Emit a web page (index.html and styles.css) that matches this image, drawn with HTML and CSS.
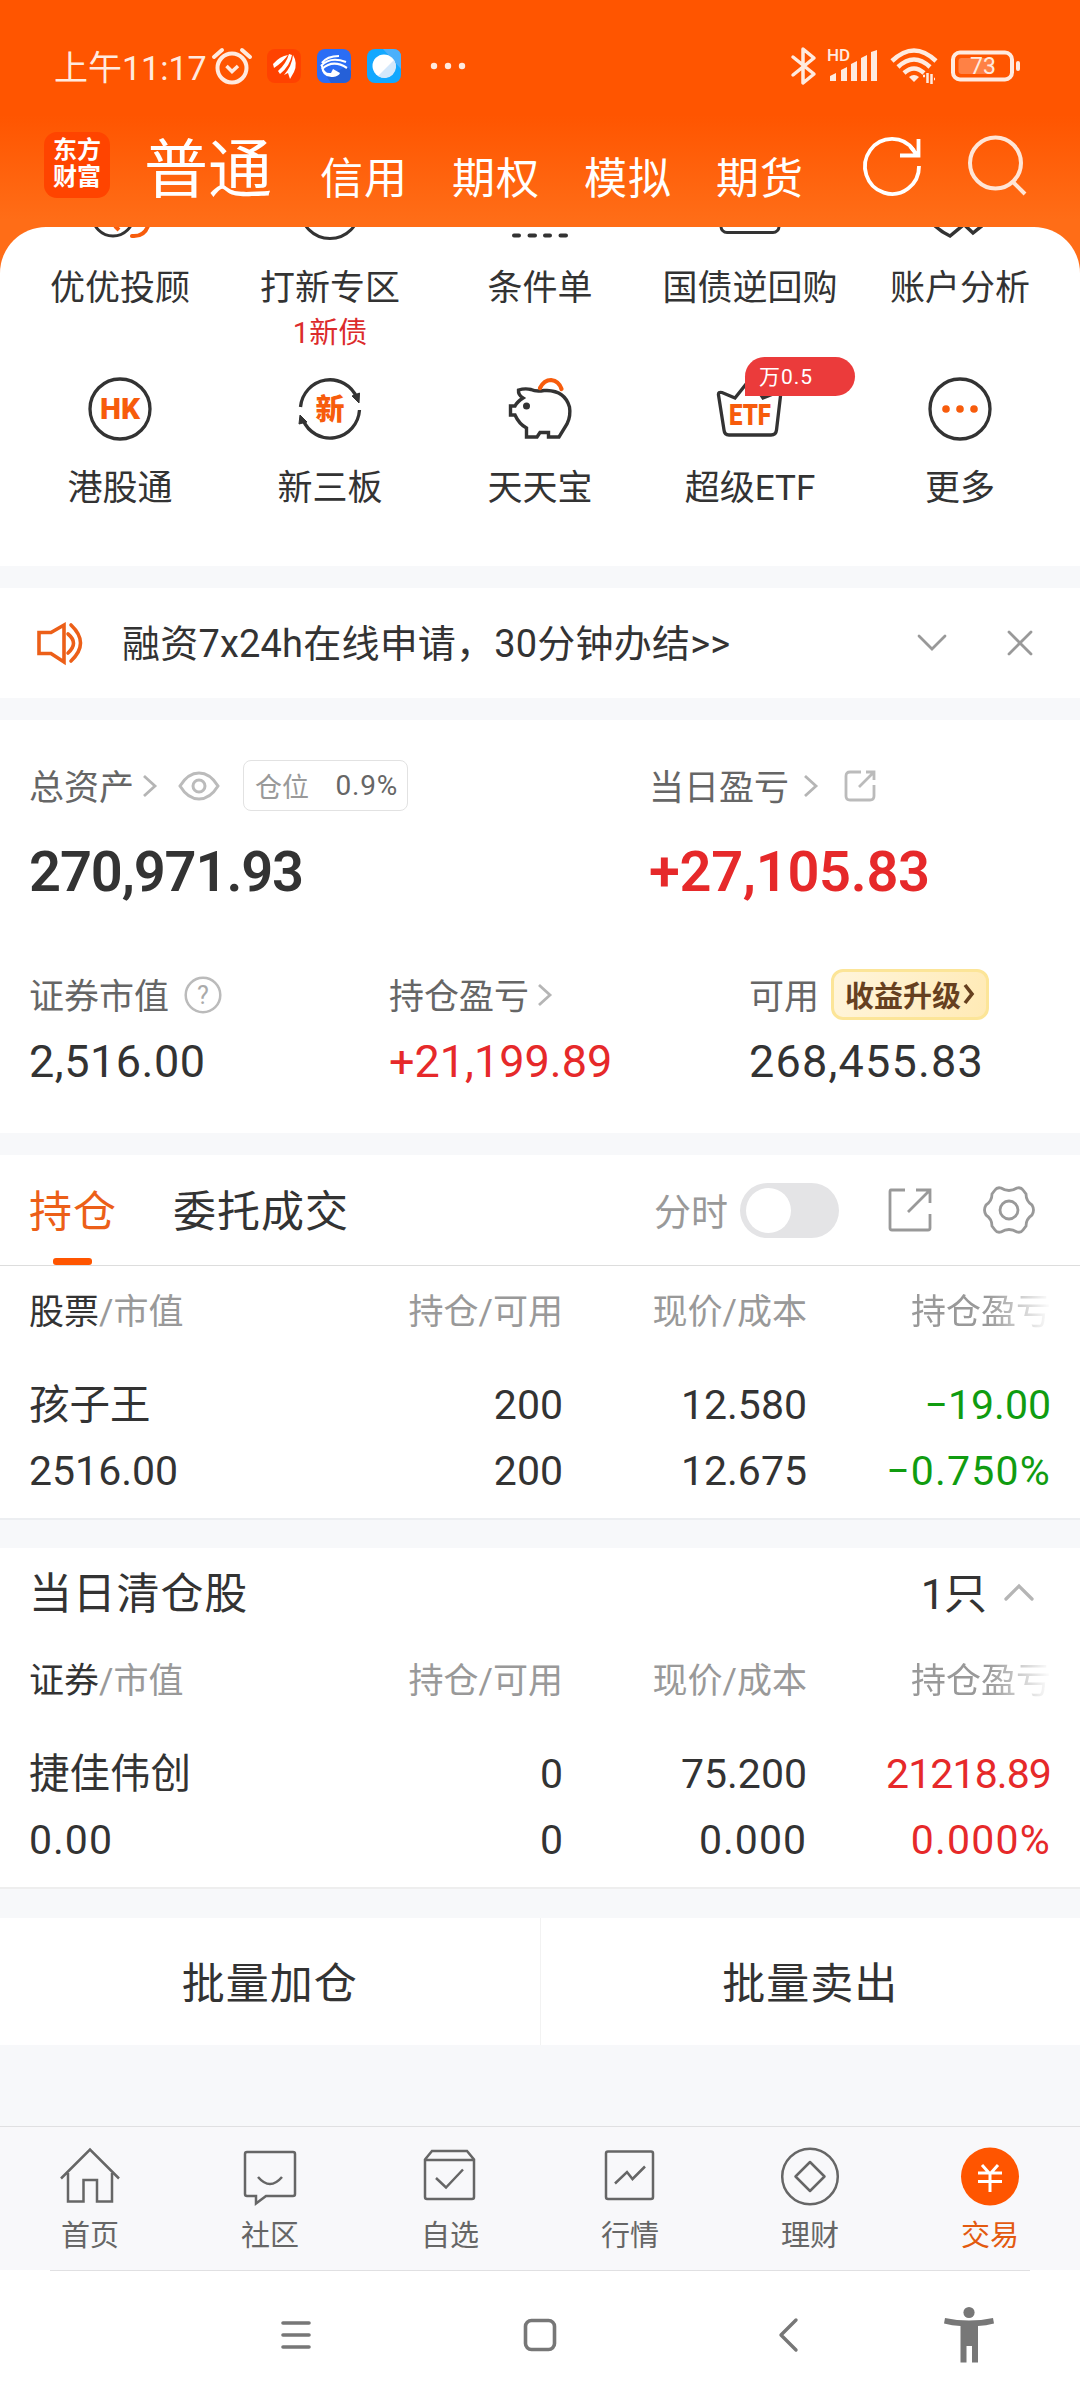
FILE: index.html
```html
<!DOCTYPE html>
<html lang="zh-CN">
<head>
  <meta charset="UTF-8">
  <meta name="viewport" content="width=device-width, initial-scale=1">
  <title>东方财富 - 交易</title>
  <link rel="stylesheet" href="styles.css">
</head>
<body>

<header class="header">
  <div class="status-bar">
    <span class="time">上午11:17</span>
    <svg class="alarm" width="40" height="38" viewBox="0 0 40 38" fill="none" stroke="#ffeadf" stroke-width="4">
      <circle cx="20" cy="21" r="14.5"/>
      <path d="M2 10 L10 3 M38 10 L30 3" stroke-linecap="round"/>
      <path d="M14.500 19 L20 24.500 L26 19" stroke-width="3.500"/>
    </svg>
    <svg class="app" width="34" height="34" viewBox="0 0 34 34">
      <rect width="34" height="34" rx="8" fill="#ff4200"/>
      <path d="M6 15 Q13 7 21 6 Q16 13 7 19Z M11 22 Q19 15 22 5 L25 6 Q23 17 13 25Z M17 26 Q25 17 26 6 Q31 14 27 23 L23 30 L21 24Z" fill="#fff"/>
    </svg>
    <svg class="app" width="34" height="34" viewBox="0 0 34 34">
      <rect width="34" height="34" rx="8" fill="#2b6df5"/>
      <path d="M14 34 L10 28 L30 17 L34 22 V26 Q34 34 26 34Z" fill="#2560d8"/>
      <path d="M5 14 Q10 7 22 7 M4 17 Q13 7 29 13 M5 20 Q16 10 30 19" fill="none" stroke="#fff" stroke-width="2.200"/>
      <path d="M4 17 Q5 29 16 28 Q22 27 23 24 L16 20 L14 24 Q7 25 6 17Z" fill="#fff"/>
    </svg>
    <svg class="app" width="34" height="34" viewBox="0 0 34 34">
      <rect width="34" height="34" rx="8" fill="#12a8ff"/>
      <path d="M16 0 H26 Q34 0 34 8 V20Z" fill="#4bb0fb"/>
      <circle cx="17" cy="17" r="11.500" fill="#fff"/>
      <path d="M27 11 A11.500 11.500 0 0 1 11 27Z" fill="#d3e8fb"/>
    </svg>
    <svg class="dots" width="36" height="8" viewBox="0 0 36 8" fill="#ffeadf">
      <circle cx="4" cy="4" r="3.200"/><circle cx="18" cy="4" r="3.200"/><circle cx="32" cy="4" r="3.200"/>
    </svg>

    <svg class="bluetooth" width="26" height="40" viewBox="0 0 26 40" fill="none" stroke="#ffeadf" stroke-width="3.500" stroke-linecap="round" stroke-linejoin="round">
      <path d="M2 11 L23 28 L12 37 V3 L23 12 L2 29"/>
    </svg>
    <svg class="signal" width="52" height="36" viewBox="0 0 52 36" fill="#ffeadf">
      <text x="0" y="13" font-size="17" font-weight="500">HD</text>
      <path d="M3 33 V28 L9 25 V33Z M14 33 V22 L20 19 V33Z M24 33 V16 L30 13 V33Z M34 33 V10 L40 7 V33Z M44 33 V4 L50 2 V33Z"/>
    </svg>
    <svg class="wifi" width="48" height="38" viewBox="0 0 48 38" fill="none" stroke="#ffeadf" stroke-width="4.500">
      <path d="M2 14 Q24 -7 46 14 M8 20 Q24 5 40 20 M14 26 Q24 17 34 26"/>
      <path d="M19 30 Q24 26 29 30 L24 35Z" fill="#ffeadf" stroke="none"/>
      <path d="M33 29 H35 M37.500 26 V36 M41.500 37 V27 M44 32 H45" stroke-width="2.500"/>
    </svg>
    <svg class="battery" width="70" height="32" viewBox="0 0 70 32">
      <rect x="2" y="2.500" width="59" height="27" rx="7" fill="none" stroke="#ffeadf" stroke-width="4"/>
      <rect x="7.500" y="8" width="35" height="16" rx="3" fill="#ff8145"/>
      <rect x="65" y="11" width="4" height="10" rx="2" fill="#ffeadf"/>
      <text x="19" y="24" font-size="23" fill="#ffeadf">73</text>
    </svg>
  </div>

  <nav class="account-nav">
    <div class="logo">东方<br>财富</div>
    <span class="account active">普通</span>
    <span class="account">信用</span>
    <span class="account">期权</span>
    <span class="account">模拟</span>
    <span class="account">期货</span>
    <svg class="refresh" width="58" height="60" viewBox="0 0 58 60" fill="none" stroke="#fff" stroke-width="3.800">
      <path d="M55 31 A27 27.500 0 1 1 50 15.500"/>
      <path d="M36 20.500 H54.500 V4 M53 20 L46 11"/>
    </svg>
    <svg class="search" width="60" height="62" viewBox="0 0 60 62" fill="none" stroke="#ffe5d6" stroke-width="4">
      <circle cx="27.500" cy="29" r="25.500"/>
      <path d="M44 47 L57 60"/>
    </svg>
  </nav>
</header>

<main>
  <section class="quick">
    <div class="quick-item">
      <svg width="62" height="62" viewBox="0 0 62 62" fill="none" stroke="#333" stroke-width="3">
        <circle cx="24" cy="37.500" r="20.500"/>
        <path d="M59 48 Q55 59 43 58" stroke="#f75c0c" stroke-width="4" stroke-linecap="round"/>
        <path d="M26 48 L30 52" stroke="#f75c0c" stroke-width="4"/>
      </svg>
      <span>优优投顾</span>
    </div>
    <div class="quick-item">
      <svg width="62" height="62" viewBox="0 0 62 62" fill="none" stroke="#333" stroke-width="3">
        <circle cx="31" cy="31" r="29.500"/>
      </svg>
      <span>打新专区</span>
      <em>1新债</em>
    </div>
    <div class="quick-item">
      <svg width="62" height="62" viewBox="0 0 62 62" stroke="#333" stroke-width="4" stroke-linecap="round">
        <path d="M5 57.500 H10 M20.500 57.500 H26 M36 57.500 H41 M51.500 57.500 H57"/>
      </svg>
      <span>条件单</span>
    </div>
    <div class="quick-item">
      <svg width="62" height="62" viewBox="0 0 62 62" fill="none" stroke="#333" stroke-width="3">
        <rect x="2" y="15" width="58" height="39.500" rx="6"/>
      </svg>
      <span>国债逆回购</span>
    </div>
    <div class="quick-item">
      <svg width="62" height="62" viewBox="0 0 62 62" fill="none" stroke="#333" stroke-width="3.500">
        <path d="M4 46 Q12 54 21 58 L35 46.500 L44 55 L54 47"/>
      </svg>
      <span>账户分析</span>
    </div>
    <div class="quick-item">
      <svg width="62" height="62" viewBox="0 0 62 62">
        <circle cx="31" cy="31" r="30" fill="none" stroke="#333" stroke-width="3.300"/>
        <text class="icon-text" x="11" y="41" font-size="29" textLength="40" lengthAdjust="spacingAndGlyphs">HK</text>
      </svg>
      <span>港股通</span>
    </div>
    <div class="quick-item">
      <svg width="62" height="62" viewBox="0 0 62 62">
        <path d="M1.500 29 A29.500 30 0 0 1 58 20 M60.500 32 A29.500 30 0 0 1 4 42" fill="none" stroke="#333" stroke-width="3.300"/>
        <path d="M53 18 L60.500 15 L60 25Z M1 37 L8 44 L0 46Z" fill="#333" stroke="#333"/>
        <text class="icon-text" x="16.500" y="42" font-size="29">新</text>
      </svg>
      <span>新三板</span>
    </div>
    <div class="quick-item">
      <svg width="62" height="62" viewBox="0 0 62 62" fill="none" stroke="#333" stroke-width="3.400">
        <path d="M35 12.500 Q27 14 22 11.500 Q16 10 9.500 12 Q9 17 14 20 Q8 24 6 28 H1.500 V37 H6 Q10 46 17.500 50 V59 H28 L31 54.500 H39.500 V59 H50 L58 46 Q62 38 60.500 29 Q56 13 38 12.500Z"/>
        <circle cx="17.500" cy="28" r="3.500" fill="#333" stroke="none"/>
        <path d="M31 10 Q35 2 42 2 Q50 3 52.500 11" stroke="#f75c0c" stroke-width="4.200" stroke-linecap="round"/>
      </svg>
      <span>天天宝</span>
    </div>
    <div class="quick-item">
      <svg width="62" height="62" viewBox="0 0 62 62">
        <path d="M-0.500 17 Q-1 13.500 3 14.500 L16 20 L28 5 H34 L44 20 L58 14.500 Q62 13.500 61.500 18 L57.500 52 Q57 57 52 57 H10 Q5.500 57 5 52Z" fill="none" stroke="#333" stroke-width="3.300"/>
        <text class="icon-text" x="10" y="47" font-size="29" textLength="42" lengthAdjust="spacingAndGlyphs">ETF</text>
      </svg>
      <b class="badge">万0.5</b>
      <span>超级ETF</span>
    </div>
    <div class="quick-item">
      <svg width="62" height="62" viewBox="0 0 62 62" fill="#f75c0c">
        <circle cx="31" cy="31" r="30" fill="none" stroke="#333" stroke-width="3.300"/>
        <circle cx="17" cy="31" r="3.800"/><circle cx="31" cy="31" r="3.800"/><circle cx="45" cy="31" r="3.800"/>
      </svg>
      <span>更多</span>
    </div>
  </section>

  <section class="notice">
    <svg width="50" height="44" viewBox="0 0 50 44" fill="none" stroke="#ec5f18" stroke-width="3.600">
      <path d="M2 11.500 H14 L27 4 V41 L14 32.500 H2Z"/>
      <path d="M31 13 Q42 22 31 32 M34 4 Q53 22 34 40" stroke-linecap="round"/>
    </svg>
    <span class="notice-text">融资7x24h在线申请，30分钟办结&gt;&gt;</span>
    <svg class="notice-down" width="30" height="18" viewBox="0 0 30 18" fill="none" stroke="#999" stroke-width="2.800" stroke-linecap="round">
      <path d="M2 2 L15 15 L28 2"/>
    </svg>
    <svg class="notice-close" width="26" height="26" viewBox="0 0 26 26" fill="none" stroke="#999" stroke-width="2.800" stroke-linecap="round">
      <path d="M2 2 L24 24 M24 2 L2 24"/>
    </svg>
  </section>

  <section class="assets">
    <div class="assets-top">
      <div>
        <div class="label">总资产
          <svg class="arrow" width="15" height="24" viewBox="0 0 15 24"><path d="M2 2 L13 12 L2 22"/></svg>
          <svg class="eye" width="42" height="30" viewBox="0 0 42 30" fill="none" stroke="#bbb" stroke-width="3">
            <path d="M2 15 Q10 2 21 2 Q32 2 40 15 Q32 28 21 28 Q10 28 2 15Z"/><circle cx="21" cy="15" r="6"/>
          </svg>
          <span class="position">仓位 <b>0.9%</b></span>
        </div>
        <div class="total">270,971.93</div>
      </div>
      <div>
        <div class="label">当日盈亏
          <svg class="arrow wide" width="15" height="24" viewBox="0 0 15 24"><path d="M2 2 L13 12 L2 22"/></svg>
          <svg class="share" width="32" height="32" viewBox="0 0 32 32" fill="none" stroke="#bbb" stroke-width="2.800">
            <path d="M17 2 H6 Q2 2 2 6 V26 Q2 30 6 30 H26 Q30 30 30 26 V15 M22 2 H30 V10 M30 2 L15 17"/>
          </svg>
        </div>
        <div class="total red">+27,105.83</div>
      </div>
    </div>
    <div class="assets-bottom">
      <div>
        <div class="label">证券市值
          <svg class="help" width="38" height="38" viewBox="0 0 38 38">
            <circle cx="19" cy="19" r="17.300" fill="none" stroke="#bbb" stroke-width="2.500"/>
            <text x="19" y="28" font-size="25" fill="#aaa" text-anchor="middle">?</text>
          </svg>
        </div>
        <div class="amount">2,516.00</div>
      </div>
      <div>
        <div class="label">持仓盈亏
          <svg class="arrow" width="15" height="24" viewBox="0 0 15 24"><path d="M2 2 L13 12 L2 22"/></svg>
        </div>
        <div class="amount red">+21,199.89</div>
      </div>
      <div>
        <div class="label">可用
          <span class="upgrade">收益升级<svg width="12" height="22" viewBox="0 0 12 22" fill="none" stroke="#66401f" stroke-width="3.600"><path d="M2 2 L9 11 L2 20"/></svg></span>
        </div>
        <div class="amount available">268,455.83</div>
      </div>
    </div>
  </section>

  <section class="holdings">
    <div class="tabs">
      <span class="tab active">持仓</span>
      <span class="tab">委托成交</span>
      <span class="switch-label">分时</span>
      <i class="switch"></i>
      <svg class="tab-share" width="44" height="44" viewBox="0 0 44 44" fill="none" stroke="#999" stroke-width="2.800">
        <path d="M17 2 H3 Q2 2 2 4 V40 Q2 42 4 42 H40 Q42 42 42 40 V26 M28 2 H42 V15 M42 2 L20 24"/>
      </svg>
      <svg class="gear" width="52" height="50" viewBox="0 0 52 50" fill="none" stroke="#999" stroke-width="2.800">
        <path d="M12 5 Q14 2 18 3 Q26 8 34 3 Q38 2 40 5 L43 9 Q43 16 49 20 Q52 25 49 30 Q43 34 43 41 L40 45 Q38 48 34 47 Q26 42 18 47 Q14 48 12 45 L9 41 Q9 34 3 30 Q0 25 3 20 Q9 16 9 9Z"/>
        <circle cx="26" cy="25" r="9"/>
      </svg>
    </div>
    <table class="stock-table">
      <thead>
        <tr><th><b>股票</b>/市值</th><th>持仓/可用</th><th>现价/成本</th><th><span class="fade">持仓盈亏</span></th></tr>
      </thead>
      <tbody>
        <tr><td class="name">孩子王</td><td>200</td><td>12.580</td><td class="green">−19.00</td></tr>
        <tr><td>2516.00</td><td>200</td><td>12.675</td><td class="green percent">−0.750%</td></tr>
      </tbody>
    </table>
  </section>

  <section class="cleared">
    <div class="cleared-title">
      <span>当日清仓股</span>
      <span class="count">1只</span>
      <svg width="30" height="18" viewBox="0 0 30 18" fill="none" stroke="#b5b5b5" stroke-width="3.300" stroke-linecap="round">
        <path d="M2 16 L15 3 L28 16"/>
      </svg>
    </div>
    <table class="stock-table">
      <thead>
        <tr><th><b>证券</b>/市值</th><th>持仓/可用</th><th>现价/成本</th><th><span class="fade">持仓盈亏</span></th></tr>
      </thead>
      <tbody>
        <tr><td class="name">捷佳伟创</td><td>0</td><td>75.200</td><td class="red profit">21218.89</td></tr>
        <tr><td class="wide">0.00</td><td>0</td><td class="wide">0.000</td><td class="red percent">0.000%</td></tr>
      </tbody>
    </table>
  </section>

  <section class="batch">
    <button>批量加仓</button>
    <button>批量卖出</button>
  </section>
</main>

<nav class="tabbar">
  <a class="tabbar-item">
    <svg width="60" height="60" viewBox="0 0 60 60"><path d="M1 31.500 L30 2.500 L59 31.500 M8 26 V54.500 H23.500 V33 H37 V54.500 H52 V26"/></svg>
    <span>首页</span>
  </a>
  <a class="tabbar-item">
    <svg width="60" height="60" viewBox="0 0 60 60"><path d="M7 5 H53 Q55 5 55 7 V47 Q55 49 53 49 H26 L16 56.500 V49 H7 Q5 49 5 47 V7 Q5 5 7 5Z M18 30 Q30 44 42 30"/></svg>
    <span>社区</span>
  </a>
  <a class="tabbar-item">
    <svg width="60" height="60" viewBox="0 0 60 60"><path d="M5 12.500 L12 4 H47 L54 12.500 V50 Q54 52 52 52 H7 Q5 52 5 50Z M5 13 H54 M16 31 L26 40.500 L43 22.500"/></svg>
    <span>自选</span>
  </a>
  <a class="tabbar-item">
    <svg width="60" height="60" viewBox="0 0 60 60"><rect x="6" y="4.500" width="47" height="47.500" rx="2"/><path d="M15 36.500 L27 25 L32.500 32 L45 19.500"/></svg>
    <span>行情</span>
  </a>
  <a class="tabbar-item">
    <svg width="60" height="60" viewBox="0 0 60 60"><circle cx="30" cy="29.500" r="27.800"/><path d="M30 15 L44.500 29.500 L30 44 L15.500 29.500Z" stroke-linejoin="round"/></svg>
    <span>理财</span>
  </a>
  <a class="tabbar-item active">
    <svg width="60" height="60" viewBox="0 0 60 60"><circle class="solid" cx="30" cy="29.500" r="29"/><path class="yen" d="M22 18 L30 27 L38 18 M18 26 H42 M18 34.500 H42 M30 27 V45"/></svg>
    <span>交易</span>
  </a>
</nav>

<footer class="system-nav">
  <svg class="menu" width="32" height="30" viewBox="0 0 32 30" stroke="#777" stroke-width="3.600" stroke-linecap="round"><path d="M3 3 H29 M3 15 H29 M3 27 H29"/></svg>
  <svg class="home" width="34" height="34" viewBox="0 0 34 34" fill="none" stroke="#777" stroke-width="3.600"><rect x="2.500" y="2.500" width="29" height="29" rx="6"/></svg>
  <svg class="back" width="20" height="34" viewBox="0 0 20 34" fill="none" stroke="#777" stroke-width="3.400" stroke-linecap="round" stroke-linejoin="round"><path d="M18 2 L3 17 L18 32"/></svg>
  <svg class="person" width="50" height="58" viewBox="0 0 50 58" fill="#777">
    <circle cx="25" cy="6.500" r="5.600"/>
    <path d="M1 12 Q25 17 49 12 L50 17.500 Q42 19.500 34 20 V56.500 H28 V40 H22.500 V56.500 H16.500 V20 Q8 19.500 0 17.500Z"/>
  </svg>
</footer>

</body>
</html>
```
FILE: styles.css
```css
* {
  box-sizing: border-box;
}
body {
  margin: 0;
  width: 1080px;
  height: 2400px;
  overflow: hidden;
  display: flex;
  flex-direction: column;
  background: #f7f8fa;
  color: #333;
  font-family: Roboto, "Noto Sans CJK SC", sans-serif;
}
svg {
  display: block;
  flex: none;
  overflow: visible;
}
b, em, i {
  font-weight: normal;
  font-style: normal;
}
.red {
  color: #e6292a;
}
.green {
  color: #109c10;
}

/* header */
.header {
  height: 275px;
  flex: none;
  background: linear-gradient(#ff5500 0, #ff5500 115px, #ff6d17 220px);
  color: #fff;
}
.status-bar {
  display: flex;
  align-items: center;
  height: 132px;
  padding: 0 59px 0 54px;
  color: #ffeadf;
}
.time {
  width: 158px;
  padding-bottom: 2px;
  font-size: 34px;
  white-space: nowrap;
}
.app {
  margin-left: 16px;
}
.alarm + .app {
  margin-left: 15px;
}
.dots {
  margin-left: 29px;
}
.bluetooth {
  margin-left: auto;
}
.signal {
  margin-left: 10px;
}
.wifi {
  margin-left: 11px;
}
.battery {
  margin-left: 13px;
}
.account-nav {
  display: flex;
  height: 95px;
  padding-left: 44px;
}
.logo {
  width: 66px;
  height: 66px;
  padding-top: 5px;
  margin-right: 34px;
  border-radius: 13px;
  background: #ff4400;
  font-size: 24px;
  font-weight: bold;
  line-height: 27px;
  text-align: center;
}
.account {
  font-size: 43px;
  line-height: 60px;
  padding-top: 17px;
  width: 132px;
  letter-spacing: 1px;
}
.account.active {
  font-size: 64px;
  line-height: 70px;
  padding-top: 4px;
  width: 176px;
  letter-spacing: 0;
}
.refresh {
  margin: 3px 0 0 16px;
}
.search {
  margin: 2px 0 0 46px;
}

/* shortcuts */
main {
  flex: 1;
  margin-top: -48px;
}
.quick {
  display: grid;
  grid-template-columns: repeat(5, 210px);
  grid-auto-rows: 200px;
  justify-content: center;
  align-content: end;
  height: 339px;
  border-radius: 46px 46px 0 0;
  background: #fff;
  overflow: hidden;
}
.quick-item {
  position: relative;
  display: flex;
  flex-direction: column;
  align-items: center;
  font-size: 35px;
  line-height: 44px;
  white-space: nowrap;
  transform: translateY(12px);
}
.quick-item span {
  margin-top: 27px;
}
.quick-item em {
  font-size: 29px;
  line-height: 30px;
  margin-top: 7px;
  color: #dc2b2b;
}
.icon-text {
  fill: #f75c0c;
  font-weight: 900;
}
.badge {
  position: absolute;
  top: -21px;
  left: 100px;
  width: 110px;
  height: 39px;
  padding-left: 14px;
  border-radius: 20px 20px 20px 0;
  background: #eb3b3b;
  color: #fff;
  font-size: 21px;
  line-height: 40px;
  letter-spacing: 1px;
}

/* notice */
.notice {
  display: flex;
  align-items: center;
  height: 110px;
  margin: 22px 0;
  padding: 0 47px 0 37px;
  background: #fff;
}
.notice-text {
  margin-left: 35px;
  padding-bottom: 5px;
  font-size: 38px;
  letter-spacing: 0.2px;
}
.notice-down {
  margin-left: auto;
}
.notice-close {
  margin-left: 60px;
}

/* assets */
.assets {
  height: 413px;
  padding: 40px 0 0 29px;
  background: #fff;
}
.assets-top {
  display: grid;
  grid-template-columns: 620px 1fr;
}
.assets-bottom {
  display: grid;
  grid-template-columns: 360px 360px 1fr;
  margin-top: 67px;
}
.label {
  display: flex;
  align-items: center;
  height: 52px;
  padding-bottom: 4px;
  font-size: 35px;
  color: #666;
}
.label > * {
  margin-top: 3px;
}
.arrow {
  margin-left: 8px;
  fill: none;
  stroke: #b5b5b5;
  stroke-width: 2.8;
}
.arrow.wide {
  margin-left: 14px;
}
.eye {
  margin-left: 21px;
}
.position {
  flex: none;
  display: flex;
  align-items: center;
  justify-content: space-between;
  width: 165px;
  height: 51px;
  margin-left: 23px;
  padding: 0 9px 0 11px;
  border: 1px solid #e2e2e2;
  border-radius: 8px;
  font-size: 27px;
  color: #999;
}
.position b {
  font-size: 28px;
  letter-spacing: 0.8px;
  color: #666;
}
.share {
  margin-left: 26px;
}
.total {
  font-size: 56px;
  font-weight: 600;
  line-height: 60px;
  margin-top: 30px;
  letter-spacing: -1.1px;
}
.total.red {
  letter-spacing: -0.3px;
}
.help {
  margin-left: 15px;
}
.upgrade {
  flex: none;
  display: flex;
  align-items: center;
  justify-content: center;
  gap: 2px;
  width: 158px;
  height: 51px;
  margin-left: 12px;
  padding-bottom: 2px;
  border: 3px solid #fce598;
  border-radius: 12px;
  background: linear-gradient(110deg, #fff5dc, #ffeab5);
  font-size: 29px;
  font-weight: bold;
  color: #66401f;
}
.amount {
  font-size: 45px;
  line-height: 52px;
  margin-top: 15px;
  letter-spacing: 0.5px;
}
.amount.red {
  letter-spacing: 0;
}
.amount.available {
  letter-spacing: 1.2px;
}

/* holdings */
.holdings {
  margin-top: 22px;
  height: 365px;
  background: #fff;
  border-bottom: 2px solid #eceef1;
}
.tabs {
  display: flex;
  align-items: center;
  height: 111px;
  padding: 0 45px 0 29px;
  border-bottom: 1px solid #ddd;
}
.tab {
  position: relative;
  margin-right: 56px;
  padding-bottom: 4px;
  font-size: 43px;
  letter-spacing: 1px;
}
.tab.active {
  color: #ec5f18;
}
.tab.active::after {
  content: "";
  position: absolute;
  left: 24px;
  bottom: -22px;
  width: 39px;
  height: 7px;
  border-radius: 3px;
  background: #ff5500;
}
.switch-label {
  margin-left: auto;
  font-size: 37px;
  color: #999;
}
.switch {
  width: 99px;
  height: 55px;
  margin-left: 12px;
  padding: 5px 6px;
  border-radius: 28px;
  background: #e4e4e6;
}
.switch::before {
  content: "";
  display: block;
  width: 45px;
  height: 45px;
  border-radius: 50%;
  background: #fff;
}
.tab-share {
  margin-left: 49px;
}
.gear {
  margin-left: 51px;
}
.stock-table {
  width: 1051px;
  border-spacing: 0;
  table-layout: fixed;
}
.stock-table th {
  height: 106px;
  padding: 0 0 22px;
  font-size: 35px;
  font-weight: normal;
  color: #999;
  text-align: right;
}
.stock-table th b {
  color: #333;
}
.stock-table td {
  height: 66px;
  padding: 0;
  font-size: 41px;
  line-height: 66px;
  text-align: right;
}
.stock-table .name {
  font-size: 40.5px;
}
.stock-table .wide {
  letter-spacing: 1px;
}
.stock-table .percent {
  letter-spacing: 1.2px;
}
.stock-table .profit {
  letter-spacing: -0.9px;
}
.stock-table th:first-child,
.stock-table td:first-child {
  width: 320px;
  padding-left: 29px;
  text-align: left;
}
.stock-table th:nth-child(3),
.stock-table th:nth-child(4) {
  width: 244px;
}
.fade {
  -webkit-mask-image: linear-gradient(90deg, #000 55%, transparent);
  mask-image: linear-gradient(90deg, #000 55%, transparent);
}

/* sold today */
.cleared {
  margin-top: 28px;
  height: 341px;
  background: #fff;
  border-bottom: 2px solid #eee;
}
.cleared-title {
  display: flex;
  align-items: center;
  height: 87px;
  padding: 0 46px 0 29px;
  font-size: 43px;
}
.cleared-title span {
  padding-bottom: 4px;
  letter-spacing: 0.8px;
}
.cleared-title .count {
  margin: 0 18px 0 auto;
  letter-spacing: -1px;
}
.batch {
  display: flex;
  margin-top: 29px;
  height: 127px;
  background: #fff;
}
.batch button {
  flex: 1;
  padding: 0 0 4px;
  border: 0;
  background: none;
  color: #333;
  font-family: inherit;
  font-size: 43px;
  letter-spacing: 1px;
}
.batch button:first-child {
  border-right: 1px solid #f2f2f2;
}

/* bottom bars */
.tabbar {
  display: grid;
  grid-template-columns: repeat(6, 1fr);
  flex: none;
  height: 144px;
  padding-top: 20px;
  border-top: 1px solid #e0e0e2;
  background: #f8f8fa;
}
.tabbar-item {
  display: flex;
  flex-direction: column;
  align-items: center;
  color: #666;
  font-size: 29px;
  line-height: 40px;
}
.tabbar-item svg {
  fill: none;
  stroke: #666;
  stroke-width: 2.5;
  margin-bottom: 9px;
}
.tabbar-item.active {
  color: #e35a10;
}
.tabbar-item .solid {
  fill: #ff5500;
  stroke: none;
}
.tabbar-item .yen {
  stroke: #fff;
  stroke-width: 3;
}
.system-nav {
  display: flex;
  align-items: center;
  flex: none;
  height: 130px;
  padding: 0 86px 0 280px;
  background: linear-gradient(#e0e0e2, #e0e0e2) center top / 980px 1px no-repeat #fff;
}
.home {
  margin-left: 211px;
}
.back {
  margin-left: 221px;
}
.person {
  margin-left: auto;
}
```
